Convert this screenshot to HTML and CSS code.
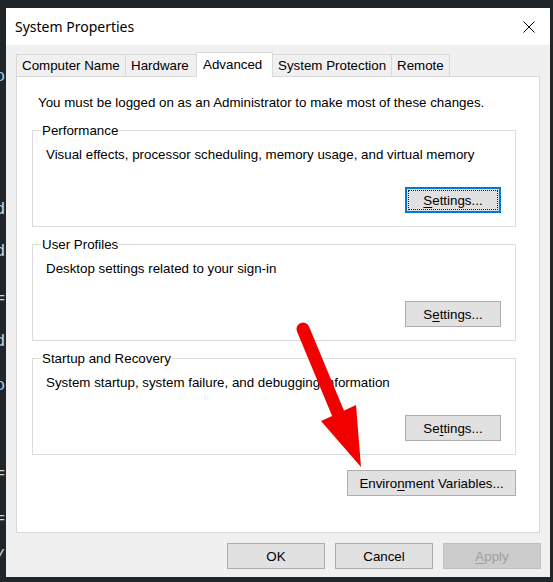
FILE: index.html
```html
<!DOCTYPE html>
<html lang="en">
<head>
<meta charset="utf-8">
<title>System Properties</title>
<link rel="stylesheet" href="styles.css">
</head>
<body>
<div class="backdrop">
  <span class="frag frag-o1">o</span>
  <span class="frag frag-d1">d</span>
  <span class="frag frag-d2">d</span>
  <span class="frag frag-e1">=</span>
  <span class="frag frag-d3">d</span>
  <span class="frag frag-o2">o</span>
  <span class="frag frag-e2">=</span>
  <span class="frag frag-e3">=</span>
  <span class="frag frag-s1">/</span>
</div>

<div class="window">
  <div class="titlebar">
    <span class="title">System Properties</span>
    <svg class="close" width="12" height="12" viewBox="0 0 12 12" aria-label="Close">
      <path d="M0.5 0.5 L11.5 11.5 M11.5 0.5 L0.5 11.5" stroke="#000" stroke-width="1" fill="none"/>
    </svg>
  </div>

  <div class="content">
    <div class="tabs">
      <div class="tab tab-name">Computer Name</div>
      <div class="tab tab-hw">Hardware</div>
      <div class="tab tab-adv active">Advanced</div>
      <div class="tab tab-sp">System Protection</div>
      <div class="tab tab-rm">Remote</div>
    </div>

    <div class="panel">
      <p class="admin">You must be logged on as an Administrator to make most of these changes.</p>

      <fieldset class="group">
        <legend>Performance</legend>
        <p class="desc">Visual effects, processor scheduling, memory usage, and virtual memory</p>
        <button class="btn settings focused"><u>S</u>ettings...</button>
      </fieldset>

      <fieldset class="group">
        <legend>User Profiles</legend>
        <p class="desc">Desktop settings related to your sign-in</p>
        <button class="btn settings">S<u>e</u>ttings...</button>
      </fieldset>

      <fieldset class="group">
        <legend>Startup and Recovery</legend>
        <p class="desc">System startup, system failure, and debugging information</p>
        <button class="btn settings">Se<u>t</u>tings...</button>
      </fieldset>

      <div class="env-row">
        <button class="btn env">Enviro<u>n</u>ment Variables...</button>
      </div>
    </div>

    <div class="footer">
      <button class="btn dlg">OK</button>
      <button class="btn dlg">Cancel</button>
      <button class="btn dlg disabled"><u>A</u>pply</button>
    </div>
  </div>
</div>

<svg class="arrow" width="553" height="582" viewBox="0 0 553 582" aria-hidden="true">
  <line x1="303" y1="329" x2="340" y2="418" stroke="#f20000" stroke-width="13" stroke-linecap="round"/>
  <path d="M321 421 Q339 413 356 405 L361 467 Z" fill="#f20000"/>
</svg>
</body>
</html>
```

FILE: styles.css
```css
* {
  box-sizing: border-box;
}

html, body {
  margin: 0;
  padding: 0;
}

body {
  width: 553px;
  height: 582px;
  overflow: hidden;
  background: #1f2529;
  font-family: "Liberation Sans", Arial, sans-serif;
  font-size: 13.33px;
  color: #000;
  position: relative;
}

/* editor text peeking out behind the dialog */
.backdrop {
  position: absolute;
  left: 0;
  top: 0;
  width: 6px;
  height: 582px;
  overflow: hidden;
}

.frag {
  position: absolute;
  left: -5px;
  font-family: "Liberation Mono", monospace;
  font-size: 17px;
  line-height: 17px;
  color: #cfd6da;
}

.frag-o1 { top: 68px; color: #a9c8e8; }
.frag-d1 { top: 201px; }
.frag-d2 { top: 243px; }
.frag-e1 { top: 290px; }
.frag-d3 { top: 333px; }
.frag-o2 { top: 377px; color: #a9c8e8; }
.frag-e2 { top: 465px; }
.frag-e3 { top: 510px; }
.frag-s1 { top: 548px; }

.window {
  margin: 8px 0 0 6px;
  width: 544px;
  height: 569px;
  background: #f0f0f0;
  display: flex;
  flex-direction: column;
}

.titlebar {
  height: 37px;
  background: #fff;
  display: flex;
  align-items: center;
  justify-content: space-between;
  padding: 0 15px 0 9px;
  flex-shrink: 0;
}

.title {
  font-family: "Noto Sans", "Open Sans", sans-serif;
  font-size: 14px;
  color: #000;
}

.close {
  display: block;
}

.content {
  padding: 7px 10px 0 10px;
  display: flex;
  flex-direction: column;
}

.tabs {
  display: flex;
  align-items: flex-end;
  height: 25px;
  margin-bottom: -1px;
  position: relative;
  z-index: 1;
}

.tab {
  height: 22px;
  margin-bottom: 1px;
  border: 1px solid #d9d9d9;
  border-bottom: none;
  background: #f0f0f0;
  padding: 0 5px;
  line-height: 22px;
  white-space: nowrap;
  margin-left: -1px;
}

.tab-name {
  margin-left: 0;
  width: 110px;
}

.tab-hw { width: 72px; }
.tab-adv { width: 77px; }
.tab-sp { width: 120px; }
.tab-rm { width: 59px; }

.tab.active {
  height: 25px;
  margin-bottom: 0;
  background: #fff;
  line-height: 23px;
  padding: 0 6px;
}

.panel {
  background: #fff;
  border: 1px solid #d9d9d9;
  height: 457px;
  padding: 18px 23px 0 15px;
  display: flex;
  flex-direction: column;
}

.admin {
  margin: 0 0 13px 6px;
  line-height: 15px;
}

.group {
  margin: 0 0 10px 0;
  padding: 0 14px 13px 13px;
  border: 1px solid #dcdcdc;
  display: flex;
  flex-direction: column;
  min-width: 0;
}

.group legend {
  margin-left: -5px;
  padding: 0 1px;
  line-height: 15px;
}

.desc {
  margin: 9px 0 0 0;
  line-height: 15px;
}

.btn {
  font-family: "Liberation Sans", Arial, sans-serif;
  font-size: 13.33px;
  color: #000;
  background: #e1e1e1;
  border: 1px solid #adadad;
  height: 26px;
  padding: 0;
  margin: 0;
  border-radius: 0;
}

.btn u {
  text-underline-offset: 2px;
}

.settings {
  width: 96px;
  align-self: flex-end;
  margin-top: 25px;
}

.settings.focused {
  border-color: #0078d7;
  box-shadow: inset 0 0 0 1px #0078d7;
  outline: 1px dotted #1b1b1b;
  outline-offset: -4px;
}

.env-row {
  display: flex;
  justify-content: flex-end;
  margin-top: 5px;
}

.env {
  width: 169px;
}

.footer {
  display: flex;
  justify-content: flex-end;
  gap: 10px;
  margin-top: 10px;
  margin-right: -1px;
}

.dlg {
  width: 98px;
}

.dlg.disabled {
  background: #cccccc;
  border-color: #bfbfbf;
  color: #a0a0a0;
}

.arrow {
  position: absolute;
  left: 0;
  top: 0;
  pointer-events: none;
}
```
